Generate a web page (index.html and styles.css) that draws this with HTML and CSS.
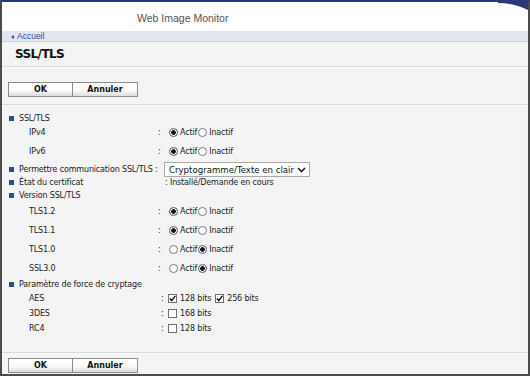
FILE: index.html
```html
<!DOCTYPE html>
<html lang="fr">
<head>
    <meta charset="UTF-8">
    <title>SSL/TLS - Web Image Monitor</title>
    <link rel="stylesheet" href="styles.css">
</head>
<body>
<div class="frame">
    <svg class="corner" width="30" height="8" viewBox="0 0 30 8"><path d="M0 0 H30 V8 C22 4 12 1 0 1 Z" fill="#30367a"/></svg>

    <div class="header">Web Image Monitor</div>
    <div class="crumb"><span class="arrow"></span>Accueil</div>

    <div class="title">SSL/TLS</div>
    <div class="sep"></div>

    <div class="btns">
        <div class="btn">OK</div>
        <div class="btn">Annuler</div>
    </div>
    <div class="sep"></div>

    <div class="content">
        <div class="head"><span class="bullet"></span>SSL/TLS</div>
        <div class="opt">
            <span class="lbl">IPv4</span><span class="colon">:</span>
            <span class="radio on"></span><span class="txt">Actif</span>
            <span class="radio"></span><span class="txt">Inactif</span>
        </div>
        <div class="opt">
            <span class="lbl">IPv6</span><span class="colon">:</span>
            <span class="radio on"></span><span class="txt">Actif</span>
            <span class="radio"></span><span class="txt">Inactif</span>
        </div>

        <div class="head"><span class="bullet"></span><span class="hlbl">Permettre communication SSL/TLS :</span>
            <div class="select">Cryptogramme/Texte en clair
                <svg width="9" height="6" viewBox="0 0 9 6"><path d="M1 1 L4.5 4.5 L8 1" fill="none" stroke="#222" stroke-width="1.6"/></svg>
            </div>
        </div>
        <div class="head"><span class="bullet"></span><span class="hlbl">État du certificat</span>: Installé/Demande en cours</div>

        <div class="head ver"><span class="bullet"></span>Version SSL/TLS</div>
        <div class="opt">
            <span class="lbl">TLS1.2</span><span class="colon">:</span>
            <span class="radio on"></span><span class="txt">Actif</span>
            <span class="radio"></span><span class="txt">Inactif</span>
        </div>
        <div class="opt">
            <span class="lbl">TLS1.1</span><span class="colon">:</span>
            <span class="radio on"></span><span class="txt">Actif</span>
            <span class="radio"></span><span class="txt">Inactif</span>
        </div>
        <div class="opt">
            <span class="lbl">TLS1.0</span><span class="colon">:</span>
            <span class="radio"></span><span class="txt">Actif</span>
            <span class="radio on"></span><span class="txt">Inactif</span>
        </div>
        <div class="opt last">
            <span class="lbl">SSL3.0</span><span class="colon">:</span>
            <span class="radio"></span><span class="txt">Actif</span>
            <span class="radio on"></span><span class="txt">Inactif</span>
        </div>

        <div class="head"><span class="bullet"></span>Paramètre de force de cryptage</div>
        <div class="chk">
            <span class="lbl">AES</span><span class="colon">:</span>
            <span class="box on"><svg width="7" height="7" viewBox="0 0 7 7"><path d="M0.8 3.6 L2.7 5.6 L6.3 0.9" fill="none" stroke="#111" stroke-width="1.4"/></svg></span><span class="txt">128 bits</span>
            <span class="box on"><svg width="7" height="7" viewBox="0 0 7 7"><path d="M0.8 3.6 L2.7 5.6 L6.3 0.9" fill="none" stroke="#111" stroke-width="1.4"/></svg></span><span class="txt">256 bits</span>
        </div>
        <div class="chk">
            <span class="lbl">3DES</span><span class="colon">:</span>
            <span class="box"></span><span class="txt">168 bits</span>
        </div>
        <div class="chk">
            <span class="lbl">RC4</span><span class="colon">:</span>
            <span class="box"></span><span class="txt">128 bits</span>
        </div>
    </div>
    <div class="sep"></div>

    <div class="btns bottom">
        <div class="btn">OK</div>
        <div class="btn">Annuler</div>
    </div>
</div>
</body>
</html>
```

FILE: styles.css
```css
* {
    margin: 0;
    padding: 0;
    box-sizing: border-box;
}

body {
    width: 530px;
    height: 376px;
    overflow: hidden;
    font-family: "DejaVu Sans", Verdana, sans-serif;
    font-size: 8px;
    color: #222;
}

.frame {
    position: relative;
    height: 376px;
    border: 2px solid #4b4b4b;
    border-top: 2px solid #30367a;
    background: #f4f4f4;
    overflow: hidden;
}

.corner {
    position: absolute;
    top: 0;
    right: 0;
}

.header {
    height: 29px;
    padding: 3px 0 0 135px;
    line-height: 26px;
    background: #fff;
    font-family: "Liberation Sans", Arial, sans-serif;
    font-size: 10.5px;
    color: #555;
}

.crumb {
    height: 11px;
    padding-left: 8px;
    line-height: 10px;
    background: #e3e5ec;
    border-bottom: 1px solid #cfd1d8;
    font-family: "Liberation Sans", Arial, sans-serif;
    font-size: 8.5px;
    color: #2c4f9e;
}

.crumb .arrow {
    display: inline-block;
    margin: 0 3px 0 1px;
    border-right: 3px solid #2c4f9e;
    border-top: 2.5px solid transparent;
    border-bottom: 2.5px solid transparent;
}

.title {
    height: 24px;
    padding-left: 13px;
    line-height: 24px;
    font-weight: bold;
    font-size: 12px;
    letter-spacing: -0.6px;
    color: #111;
}

.sep {
    height: 2px;
    border-top: 1px solid #d9d9d9;
    border-bottom: 1px dotted #fff;
}

.btns {
    display: flex;
    height: 36px;
    padding: 14px 0 0 6px;
}

.btns.bottom {
    height: 20px;
    padding-top: 4px;
}

.btn {
    width: 65px;
    height: 15px;
    line-height: 13px;
    text-align: center;
    font-weight: bold;
    font-size: 8px;
    color: #111;
    border: 1px solid #8c8c8c;
    background: linear-gradient(#fff 0%, #fbfbfb 55%, #dcdcdc 100%);
}

.btn + .btn {
    border-left: none;
}

.content {
    height: 246px;
    padding-top: 6px;
    letter-spacing: -0.15px;
}

.head {
    display: flex;
    align-items: center;
    height: 13px;
    padding-left: 7px;
}

.head.ver {
    height: 15px;
    padding-bottom: 2px;
}

.bullet {
    width: 5px;
    height: 5px;
    margin-right: 5px;
    background: #2f4a8a;
}

.hlbl {
    width: 146px;
    flex-shrink: 0;
}

.select {
    display: flex;
    align-items: center;
    justify-content: space-between;
    width: 146px;
    height: 15px;
    margin-left: -1px;
    padding: 0 3px 0 4px;
    background: #fff;
    border: 1px solid #a9a9a9;
    font-size: 8.6px;
    letter-spacing: 0;
    color: #111;
}

.opt, .chk {
    display: flex;
    align-items: center;
    padding: 1px 0 5px 27px;
    height: 19px;
}

.opt.last {
    height: 17px;
    padding-bottom: 3px;
}

.chk {
    height: 15px;
    padding: 1px 0 1px 27px;
}

.lbl {
    width: 129px;
    flex-shrink: 0;
}

.chk .lbl {
    width: 132px;
}

.colon {
    width: 11px;
}

.chk .colon {
    width: 7px;
}

.radio {
    width: 9px;
    height: 9px;
    border-radius: 50%;
    border: 1px solid #7a7a7a;
    background: #fff;
}

.radio.on {
    border-color: #555;
    background: radial-gradient(circle, #111 0, #111 2px, #fff 2.6px);
}

.radio + .txt {
    margin: 0 1px 0 2px;
}

.box {
    display: flex;
    align-items: center;
    justify-content: center;
    width: 9px;
    height: 9px;
    border: 1px solid #6e6e6e;
    background: #fff;
}

.box + .txt {
    margin: 0 4px 0 3px;
}
```
